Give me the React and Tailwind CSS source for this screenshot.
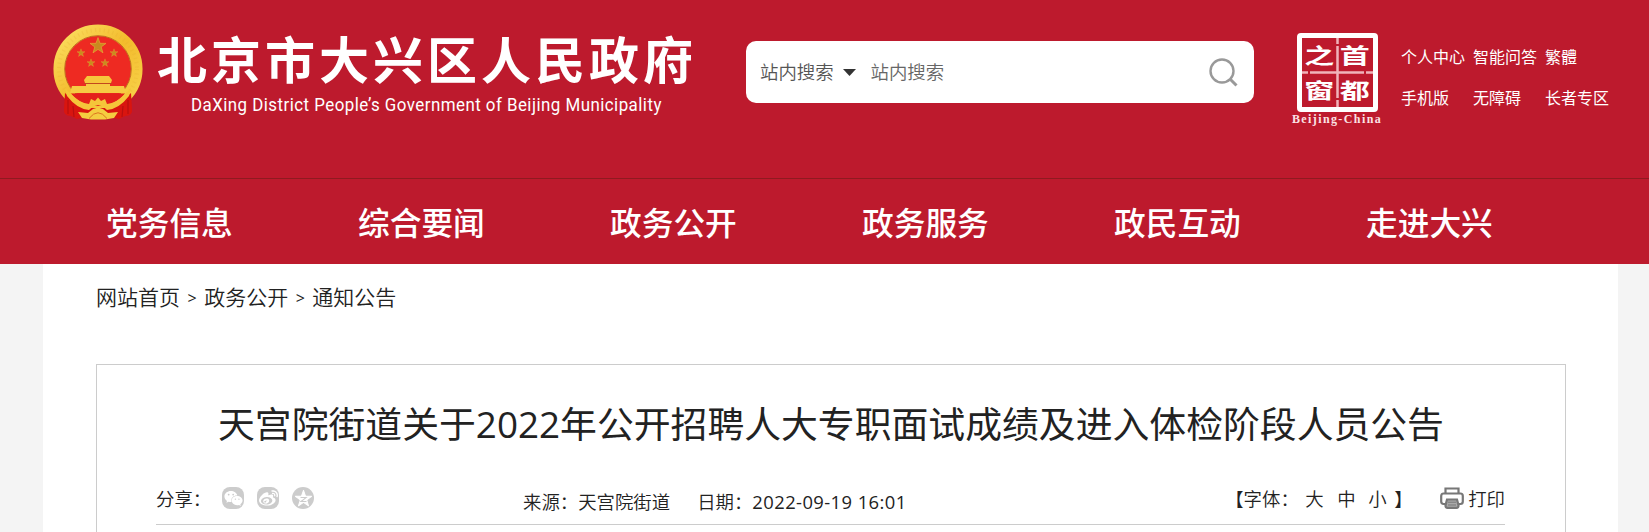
import { FaWeixin, FaWeibo } from 'react-icons/fa';

const NAV_ITEMS = ['党务信息', '综合要闻', '政务公开', '政务服务', '政民互动', '走进大兴'];

const TOP_LINKS = ['个人中心', '智能问答', '繁體', '手机版', '无障碍', '长者专区'];

const CRUMBS = ['网站首页', '政务公开', '通知公告'];

const STAR = 'M0 -10 L2.4 -3.2 L9.5 -3.1 L3.8 1.2 L5.9 8.1 L0 4 L-5.9 8.1 L-3.8 1.2 L-9.5 -3.1 L-2.4 -3.2 Z';

const Emblem = () => (
  <svg className="block h-[96px] w-[90px]" viewBox="0 0 90 96">
    <defs>
      <linearGradient id="gold" x1="0" y1="0" x2="1" y2="1">
        <stop offset="0" stopColor="#fbdf62" />
        <stop offset="0.5" stopColor="#f3bb2c" />
        <stop offset="1" stopColor="#f8d44c" />
      </linearGradient>
    </defs>
    {/* Wheat ring */}
    <circle cx="45" cy="45" r="39" fill="#ee2a22" />
    <circle cx="45" cy="45" r="38.8" fill="none" stroke="url(#gold)" strokeWidth="11.5" />
    <circle cx="45" cy="45" r="33.3" fill="none" stroke="#b8641c" strokeWidth="0.9" />
    <circle cx="45" cy="45" r="39" fill="none" stroke="#e0a32a" strokeWidth="4" strokeDasharray="1.2 3.2" opacity="0.2" />
    {/* Stars */}
    <g fill="#c98b1f" stroke="#e9b63a" strokeWidth="0.7">
      <path d={STAR} transform="translate(45 22) scale(0.84)" />
      <path d={STAR} transform="translate(28 29) scale(0.42)" />
      <path d={STAR} transform="translate(61 29) scale(0.42)" />
      <path d={STAR} transform="translate(38 39) scale(0.42)" />
      <path d={STAR} transform="translate(52 39) scale(0.42)" />
    </g>
    {/* Gate tower */}
    <path d="M34 52 L56 52 L59 56 L58 59 L32 59 L31 56 Z" fill="#f6c63c" />
    <path d="M33 60 H57 V62 H71 L73 69 H17 L19 62 H33 Z" fill="#f6cb43" />
    <path d="M31 59.5 H59" stroke="#b8501c" strokeWidth="0.8" />
    <path d="M18 69.5 H72 Q62 82 45 82 Q28 82 18 69.5 Z" fill="#e4211b" />
    {/* Drapery */}
    <path d="M12 69 Q24 81 38 84 H52 Q66 81 78 69 L79 85 Q80 92 72 92 L66 95 Q45 88 24 95 L18 92 Q10 92 11 85 Z" fill="#d9150f" />
    <path d="M15 76 L15 90 M20 82 L21 93 M75 76 L75 90 M70 82 L69 93" stroke="#b80f10" strokeWidth="1.2" />
    {/* Gear and ribbon */}
    <path d="M12 64 L17 69 Q26 79 36 80 L38 75 L42 77 L45 73.5 L48 77 L52 75 L54 80 Q64 79 73 69 L78 64 L76 72 Q66 85 54 86 L50 82.5 L45 81 L40 82.5 L36 86 Q24 85 14 72 Z" fill="#f5c53a" />
    <path d="M25 88 L35 89 L40 85 L45 83.5 L50 85 L55 89 L65 88 L61 94 L52 95.5 H38 L29 94 Z" fill="#f4cc40" />
    <path d="M36 94.5 Q45 83 54 94.5" fill="none" stroke="#d96a1c" strokeWidth="0.9" />
  </svg>
);

const SealLogo = () => (
  <div className="ml-[38px] mt-[33px] flex w-[90px] flex-col items-center">
    <div className="relative grid h-[79px] w-[81px] grid-cols-2 grid-rows-2 place-items-center rounded-[4px] border-[5px] border-white text-[30px] font-bold leading-none text-white">
      <span className="scale-y-[0.7]">之</span>
      <span className="scale-y-[0.7]">首</span>
      <span className="scale-y-[0.7]">窗</span>
      <span className="scale-y-[0.7]">都</span>
      <svg className="absolute inset-0 h-full w-full" viewBox="0 0 71 69" stroke="#f0b4ba" strokeWidth="2.5">
        <path d="M35.5 0 V6 M35.5 8 V60 M35.5 62 V69 M0 34.5 H6 M8 34.5 H62 M64 34.5 H71" />
      </svg>
    </div>
    <span className="mt-[1px] whitespace-nowrap font-['Liberation_Serif',serif] text-[12px] font-bold leading-[12px] tracking-[1.4px] text-[#fbe3e5]">
      Beijing-China
    </span>
  </div>
);

const QzoneIcon = () => (
  <svg className="h-[17px] w-[17px]" viewBox="-10 -10 20 19">
    <path d={STAR} fill="#fff" stroke="#fff" strokeWidth="1.2" strokeLinejoin="round" />
    <path d="M-3.5 -1.6 H3 L-3 3 H3.5" fill="none" stroke="#ccc" strokeWidth="1.3" />
  </svg>
);

const PrinterIcon = () => (
  <svg className="h-[22px] w-[24px]" viewBox="0 0 24 22" fill="none" stroke="#777" strokeWidth="2.2">
    <path d="M5.5 6 V1.5 H18.5 V6" />
    <path d="M5 17 H3.5 Q1.2 17 1.2 14.5 V9 Q1.2 6.5 3.5 6.5 H20.5 Q22.8 6.5 22.8 9 V14.5 Q22.8 17 20.5 17 H19" />
    <path d="M7 12.5 H17 L18.5 18.5 Q18.5 20.8 16.5 20.8 H7.5 Q5.5 20.8 5.5 18.5 Z" fill="#aaa" />
    <path d="M8 15.2 H16 M8 18 H16" strokeWidth="1" />
  </svg>
);

const SearchBox = () => (
  <div className="ml-[54px] mt-[41px] flex h-[62px] w-[508px] items-center rounded-[10px] bg-white text-[18.4px] font-[350] text-[#555]">
    <span className="ml-[14px] leading-none">站内搜索</span>
    <svg className="ml-[9px] h-[7px] w-[13px]" viewBox="0 0 13 7">
      <path d="M0 0 H13 L6.5 7 Z" fill="#333" />
    </svg>
    <span className="ml-[15px] mt-[1px] leading-none text-[#666]">站内搜索</span>
    <svg className="ml-auto mr-[16px] h-[29px] w-[29px]" viewBox="0 0 29 29" fill="none" stroke="#999" strokeWidth="2.4">
      <circle cx="13" cy="13" r="11.5" />
      <path d="M21 21 L27.5 27.5" strokeWidth="3" />
    </svg>
  </div>
);

const Header = () => (
  <header className="h-[264px] bg-[#bd1a2d] text-white">
    <div className="flex h-[178px] items-start">
      <div className="ml-[53px] mt-[24px]">
        <Emblem />
      </div>
      <div className="ml-[14px] mt-[34px] flex w-[535px] flex-col">
        <h1 className="whitespace-nowrap text-[50px] font-bold leading-[52px] tracking-[4px]">北京市大兴区人民政府</h1>
        <p className="ml-[34px] mt-[7px] origin-left scale-x-[0.938] whitespace-nowrap font-[Roboto,sans-serif] text-[18px] leading-[24px] tracking-[0.5px]">
          DaXing District People’s Government of Beijing Municipality
        </p>
      </div>
      <SearchBox />
      <SealLogo />
      <div className="ml-[19px] mt-[45px] grid grid-cols-[72px_72px_80px] gap-y-[17px] whitespace-nowrap text-[16px] leading-[24px]">
        {TOP_LINKS.map((link) => (
          <a key={link} href="#">{link}</a>
        ))}
      </div>
    </div>
    <nav className="flex h-[86px] border-t border-[#8f1a20] pl-[43px]">
      {NAV_ITEMS.map((item) => (
        <a key={item} href="#" className="w-[252px] pl-[63px] text-[31.7px] font-medium leading-[87px]">
          {item}
        </a>
      ))}
    </nav>
  </header>
);

const ArticleMeta = () => (
  <div className="ml-[59px] mr-[60px] flex h-[49px] items-start border-b border-[#ccc] text-[18.4px] font-[350] leading-[24px] text-[#222]">
    <span className="mt-[11px] w-[66px]">分享：</span>
    <div className="mt-[11px] flex gap-[13px]">
      <span className="flex h-[22px] w-[22px] items-center justify-center rounded-[8px] bg-[#ccc] text-white">
        <FaWeixin size={19} />
      </span>
      <span className="flex h-[22px] w-[22px] items-center justify-center rounded-[8px] bg-[#ccc] text-white">
        <FaWeibo size={19} />
      </span>
      <span className="flex h-[22px] w-[22px] items-center justify-center rounded-full bg-[#ccc]">
        <QzoneIcon />
      </span>
    </div>
    <span className="ml-[209px] mt-[14px]">来源：天宫院街道</span>
    <span className="ml-[27px] mt-[14px]">
      日期：<span className="font-normal tracking-[0.42px]">2022-09-19 16:01</span>
    </span>
    <div className="ml-auto mt-[11px] flex">
      <span className="w-[80px]">【字体：</span>
      <span className="w-[32px]">大</span>
      <span className="w-[31px]">中</span>
      <span className="w-[26px]">小</span>
      <span className="w-[46px]">】</span>
    </div>
    <div className="mt-[11px] flex">
      <PrinterIcon />
      <span className="ml-[4px]">打印</span>
    </div>
  </div>
);

export default function App() {
  return (
    <div className="h-[532px] overflow-hidden bg-[#f4f4f4] font-['Open_Sans','Noto_Sans_CJK_SC',sans-serif]">
      <Header />
      <main className="ml-[43px] h-[268px] w-[1575px] bg-white px-[53px]">
        <div className="flex h-[100px] items-start gap-[7.5px] pt-[18px] text-[21px] font-[350] leading-[30px] text-[#222]">
          {CRUMBS.map((crumb, i) => (
            <span key={crumb} className="flex gap-[7.5px]">
              {i > 0 && <span className="pt-px text-[16px] font-normal">&gt;</span>}
              <a href="#">{crumb}</a>
            </span>
          ))}
        </div>
        <article className="mr-[-1px] h-[168px] border border-b-0 border-[#ccc]">
          <h2 className="h-[111px] whitespace-nowrap pt-[31px] text-center text-[36.85px] leading-[56px] text-[#222]">
            天宫院街道关于2022年公开招聘人大专职面试成绩及进入体检阶段人员公告
          </h2>
          <ArticleMeta />
        </article>
      </main>
    </div>
  );
}
